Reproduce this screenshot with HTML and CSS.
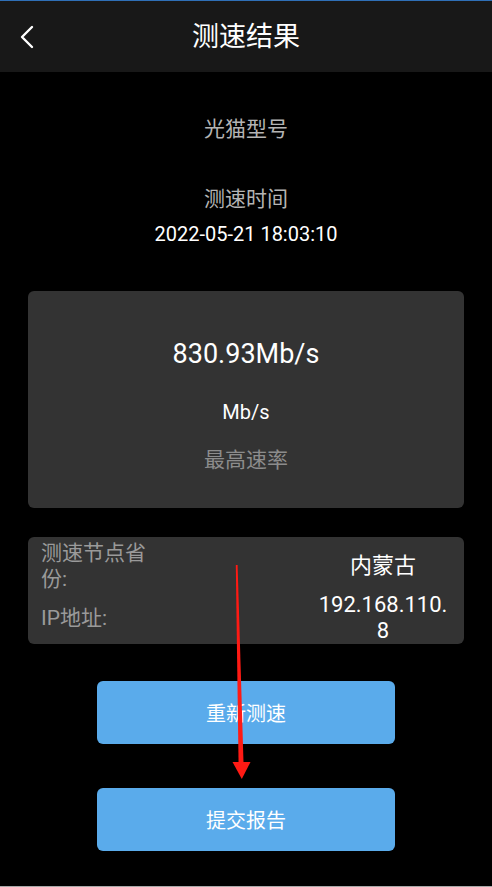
FILE: index.html
```html
<!DOCTYPE html>
<html lang="zh-CN">
<head>
<meta charset="utf-8">
<title>测速结果</title>
<link rel="stylesheet" href="styles.css">
</head>
<body>
<div class="page">
  <div class="topline"></div>
  <header class="appbar">
    <svg class="back" width="14" height="24" viewBox="0 0 14 24"><path d="M12 2 L2 12 L12 22" fill="none" stroke="#fff" stroke-width="2.4" stroke-linecap="round" stroke-linejoin="round"/></svg>
    <h1 class="title">测速结果</h1>
  </header>
  <main class="content">
    <div class="label model">光猫型号</div>
    <div class="label time-label">测速时间</div>
    <div class="date">2022-05-21 18:03:10</div>

    <section class="card speed-card">
      <div class="speed">830.93Mb/s</div>
      <div class="unit">Mb/s</div>
      <div class="speed-label">最高速率</div>
    </section>

    <section class="card info-card">
      <div class="info-key">测速节点省份:</div>
      <div class="info-val">内蒙古</div>
      <div class="info-key">IP地址:</div>
      <div class="info-val">192.168.110.8</div>
    </section>

    <div class="actions">
      <button class="btn">重新测速</button>
      <button class="btn">提交报告</button>
    </div>
  </main>
  <svg class="annotation" width="492" height="887" viewBox="0 0 492 887">
    <polygon points="235.8,565 237.6,565 243.6,766 238.6,766" fill="#ff1a14"/>
    <polygon points="232.5,762 250.5,762 241.8,779" fill="#ff1a14"/>
  </svg>
</div>
</body>
</html>
```
FILE: styles.css
```css
* { box-sizing: border-box; }
html, body {
  margin: 0;
  padding: 0;
  background: #000;
}
body {
  font-family: Roboto, "Noto Sans CJK SC", sans-serif;
  color: #fff;
}
.page {
  position: relative;
  width: 492px;
  height: 887px;
  overflow: hidden;
  background: #000;
  border-bottom: 1px solid #a8a8a8;
}
.topline {
  height: 1px;
  background: #2f6fb7;
}
.appbar {
  height: 71px;
  background: #181818;
  display: flex;
  align-items: center;
  justify-content: center;
  position: relative;
}
.back {
  position: absolute;
  left: 20px;
  top: 24px;
}
.title {
  margin: 0;
  font-size: 27px;
  font-weight: 400;
  color: #fff;
  line-height: 32px;
}
.content {
  display: flex;
  flex-direction: column;
  align-items: center;
  padding: 0 28px;
}
.label {
  font-size: 21px;
  line-height: 24px;
  color: #b4b4b4;
}
.model { margin-top: 45px; }
.time-label { margin-top: 46px; }
.date {
  margin-top: 11px;
  font-size: 20px;
  line-height: 24px;
  color: #fff;
}
.card {
  width: 100%;
  background: #333333;
  border-radius: 6px;
}
.speed-card {
  margin-top: 45px;
  height: 217px;
  display: flex;
  flex-direction: column;
  align-items: center;
  padding-top: 47px;
}
.speed {
  font-size: 27px;
  line-height: 32px;
  color: #fff;
}
.unit {
  margin-top: 30px;
  font-size: 20px;
  line-height: 24px;
  color: #fff;
}
.speed-label {
  margin-top: 24px;
  font-size: 21px;
  line-height: 24px;
  color: #8c8c8c;
}
.info-card {
  margin-top: 29px;
  height: 107px;
  padding: 3px 13px 0 13px;
  display: grid;
  grid-template-columns: 112px 1fr;
  grid-auto-rows: 52px;
}
.info-key {
  font-size: 21px;
  line-height: 26px;
  color: #9a9a9a;
  align-self: center;
}
.info-val {
  justify-self: end;
  align-self: center;
  width: 136px;
  text-align: center;
  font-size: 22px;
  line-height: 26px;
  color: #fff;
  word-break: break-all;
}
.actions {
  margin-top: 37px;
  display: flex;
  flex-direction: column;
  gap: 44px;
}
.btn {
  width: 298px;
  height: 63px;
  border: none;
  border-radius: 6px;
  background: #5aabeb;
  color: #fff;
  font-family: Roboto, "Noto Sans CJK SC", sans-serif;
  font-size: 20px;
  padding: 0;
}
.annotation {
  position: absolute;
  left: 0;
  top: 0;
  pointer-events: none;
}
```
